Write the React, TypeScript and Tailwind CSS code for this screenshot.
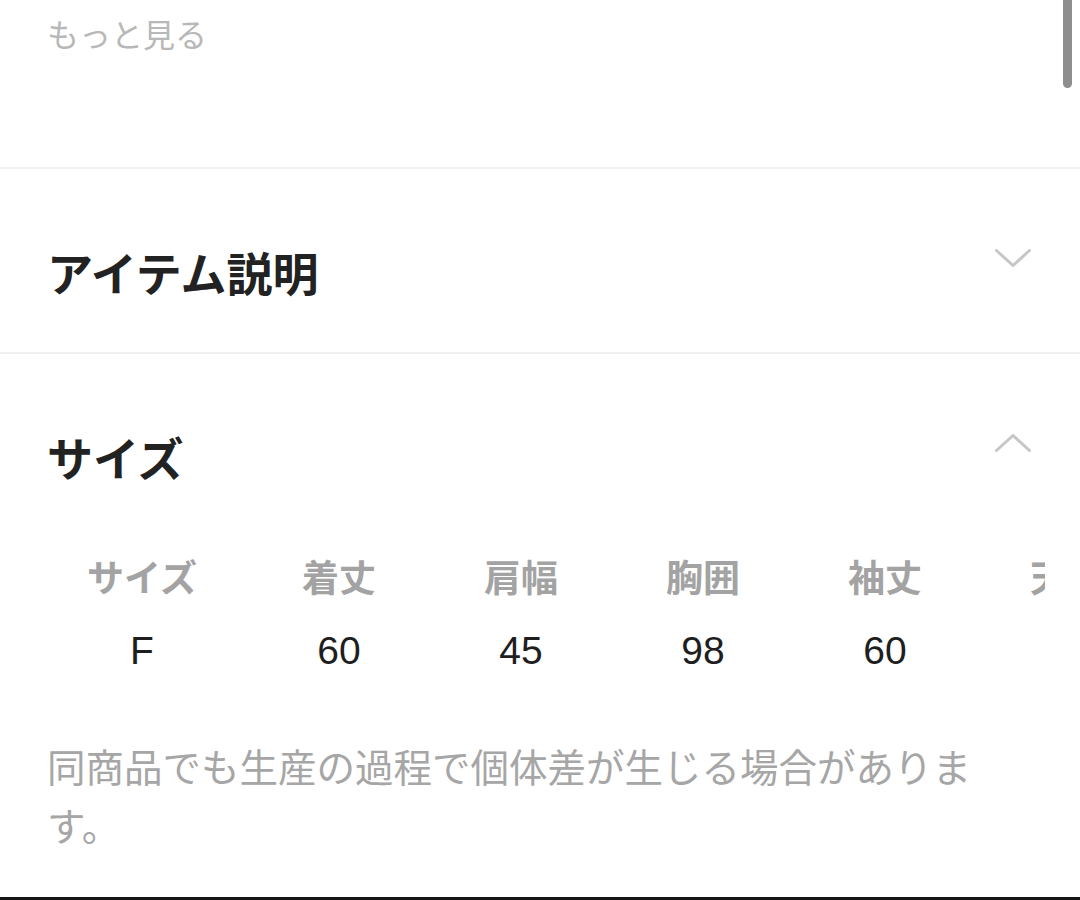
import React from 'react';

const jp = '"Noto Sans CJK JP", "Noto Sans", sans-serif';
const num = '"Liberation Sans", Arial, sans-serif';

const columns = [
  { label: 'サイズ', value: 'F', width: 212 },
  { label: '着丈', value: '60', width: 182 },
  { label: '肩幅', value: '45', width: 182 },
  { label: '胸囲', value: '98', width: 182 },
  { label: '袖丈', value: '60', width: 182 },
  { label: '天丈', value: '80', width: 182 },
];

function Chevron({ up }: { up?: boolean }) {
  return (
    <svg width="36" height="18" viewBox="0 0 36 18" className="mt-[8px] shrink-0" fill="none">
      <path
        d={up ? 'M1.5 16.5 L18 1.5 L34.5 16.5' : 'M1.5 1.5 L18 16.5 L34.5 1.5'}
        stroke="#c6c6c6"
        strokeWidth="3"
        strokeLinecap="round"
        strokeLinejoin="round"
      />
    </svg>
  );
}

function SectionHeader({ title, up }: { title: string; up?: boolean }) {
  return (
    <div className="flex justify-between items-start pl-[47px] pr-[49px]">
      <h2 className="text-[46px] leading-[60px] font-bold text-[#222]" style={{ fontFamily: jp }}>
        {title}
      </h2>
      <Chevron up={up} />
    </div>
  );
}

export default function App() {
  return (
    <div className="relative w-[1080px] h-[900px] bg-white overflow-hidden" style={{ fontFamily: jp }}>
      {/* more link */}
      <div className="h-[167px] pl-[47px] pt-[10px]">
        <span className="text-[32px] leading-[46px] text-[#b8b8b8]">もっと見る</span>
      </div>
      <div className="h-[2px] bg-[#f0f0f0]" />

      {/* item description */}
      <div className="h-[183px] pt-[72px]">
        <SectionHeader title="アイテム説明" />
      </div>
      <div className="h-[2px] bg-[#f0f0f0]" />

      {/* size */}
      <div className="pt-[72px]">
        <SectionHeader title="サイズ" up />

        <div className="ml-[36px] w-[1009px] overflow-hidden mt-[62px] py-[3px]">
          <div className="flex">
            {columns.map((c) => (
              <div key={c.label} className="flex flex-col items-center shrink-0" style={{ width: c.width }}>
                <div className="text-[37px] leading-[50px] font-bold text-[#a3a3a3] whitespace-nowrap">
                  {c.label}
                </div>
                <div
                  className="mt-[25px] text-[39px] leading-[50px] text-[#1e1e1e]"
                  style={{ fontFamily: num }}
                >
                  {c.value}
                </div>
              </div>
            ))}
          </div>
        </div>

        <p className="ml-[47px] w-[950px] mt-[57px] text-[38.5px] leading-[59px] text-[#a6a6a6]">
          同商品でも生産の過程で個体差が生じる場合があります。
        </p>
      </div>

      {/* scrollbar */}
      <div className="absolute top-[-6px] right-[8px] w-[9px] h-[94px] rounded-full bg-[#8e8e8e]" />
      {/* bottom edge */}
      <div className="absolute bottom-0 left-0 right-0 h-[3px] bg-[#151515]" />
    </div>
  );
}
